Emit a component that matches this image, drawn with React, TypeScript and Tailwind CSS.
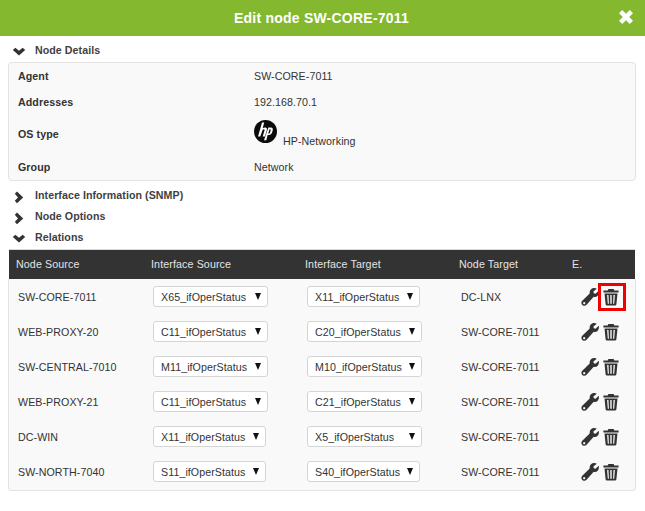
import React from 'react';

type Relation = {
  source: string;
  ifSource: string;
  ifSourceWidth: string;
  ifTarget: string;
  ifTargetWidth: string;
  target: string;
  highlight?: boolean;
};

const relations: Relation[] = [
  { source: 'SW-CORE-7011', ifSource: 'X65_ifOperStatus', ifSourceWidth: 'w-[115px]', ifTarget: 'X11_ifOperStatus', ifTargetWidth: 'w-[113px]', target: 'DC-LNX', highlight: true },
  { source: 'WEB-PROXY-20', ifSource: 'C11_ifOperStatus', ifSourceWidth: 'w-[115px]', ifTarget: 'C20_ifOperStatus', ifTargetWidth: 'w-[115px]', target: 'SW-CORE-7011' },
  { source: 'SW-CENTRAL-7010', ifSource: 'M11_ifOperStatus', ifSourceWidth: 'w-[115px]', ifTarget: 'M10_ifOperStatus', ifTargetWidth: 'w-[115px]', target: 'SW-CORE-7011' },
  { source: 'WEB-PROXY-21', ifSource: 'C11_ifOperStatus', ifSourceWidth: 'w-[115px]', ifTarget: 'C21_ifOperStatus', ifTargetWidth: 'w-[115px]', target: 'SW-CORE-7011' },
  { source: 'DC-WIN', ifSource: 'X11_ifOperStatus', ifSourceWidth: 'w-[113px]', ifTarget: 'X5_ifOperStatus', ifTargetWidth: 'w-[115px]', target: 'SW-CORE-7011' },
  { source: 'SW-NORTH-7040', ifSource: 'S11_ifOperStatus', ifSourceWidth: 'w-[113px]', ifTarget: 'S40_ifOperStatus', ifTargetWidth: 'w-[113px]', target: 'SW-CORE-7011' },
];

const details = [
  { label: 'Agent', value: 'SW-CORE-7011', height: 'h-[26px]' },
  { label: 'Addresses', value: '192.168.70.1', height: 'h-[26px]' },
];

const Chevron = ({ open }: { open: boolean }) => (
  <svg width="14" height="14" viewBox="0 0 14 14" className="shrink-0 translate-y-[2px]" aria-hidden="true">
    {open ? (
      <path d="M0.8 5 L3.4 2.8 L7 5.8 L10.6 2.8 L13.2 5 L7 10.6 Z" fill="#333" />
    ) : (
      <path d="M5 1.4 L11.2 7.4 L5 13.2 L2.8 10.8 L6 7.4 L2.8 3.8 Z" fill="#333" />
    )}
  </svg>
);

const SectionTitle = ({ title, open = false, className = '' }: { title: string; open?: boolean; className?: string }) => (
  <div className={`flex items-center pl-[4px] gap-[9px] h-[21px] text-[10.67px] tracking-[0.05px] font-bold text-[#3f3f3f] ${className}`}>
    <Chevron open={open} />
    <span>{title}</span>
  </div>
);

const Select = ({ value, width }: { value: string; width: string }) => (
  <div className={`flex items-center justify-between h-[21px] pl-[7px] pr-[6px] bg-white border border-[#d5d5d5] rounded-[3px] text-[10.67px] tracking-[0.07px] text-[#333] ${width}`}>
    <span>{value}</span>
    <svg width="6" height="7" viewBox="0 0 6 7" aria-hidden="true">
      <path d="M0 0 H6 L3 7 Z" fill="#111" />
    </svg>
  </div>
);

const WrenchIcon = () => (
  <svg width="18" height="18" viewBox="0 0 18 18" aria-hidden="true">
    <path
      fillRule="evenodd"
      d="M12.2 0.1 Q14.2 -0.2 15.8 0.7 L12.4 3.4 L12.8 5.2 L14.6 5.8 L17.7 2.8 Q18.4 5.5 16.9 7.4 Q15 9.5 12.7 8.8 L5.6 16.8 Q3.7 18.5 1.6 17.2 Q-0.5 15.5 1 13 L8.7 5.5 Q8.2 1.7 12.2 0.1 Z M3.2 14 A1.1 1.1 0 1 0 3.21 14 Z"
      fill="#333"
    />
  </svg>
);

const TrashIcon = () => (
  <svg width="16" height="18" viewBox="0 0 16 18" aria-hidden="true">
    <path d="M5.4 1 L10.6 1 L11.3 2.6 L15.6 2.6 L15.6 4.6 L0.4 4.6 L0.4 2.6 L4.7 2.6 Z" fill="#333" />
    <path
      fillRule="evenodd"
      d="M1.5 5.4 H14.5 L13.4 16.3 Q13.3 17.6 12 17.6 H4 Q2.7 17.6 2.6 16.3 Z M4.1 7 L4.8 15.8 H5.9 L5.5 7 Z M7.3 7 V15.8 H8.7 V7 Z M10.5 7 L10.1 15.8 H11.2 L11.9 7 Z"
      fill="#333"
    />
  </svg>
);

const App = () => {
  return (
    <div className="w-[645px] h-[511px] bg-white font-['Liberation_Sans',Arial,sans-serif] overflow-hidden">
      <header className="relative h-[36px] bg-[#84b82e] flex items-center justify-center">
        <h1 className="text-[14px] font-bold text-white tracking-[0.23px] -translate-x-[1px]">Edit node SW-CORE-7011</h1>
        <svg width="16" height="16" viewBox="0 0 16 16" className="absolute right-[11px] top-[9px]" aria-hidden="true">
          <path d="M4.2 1 L8 4.8 L11.8 1 L15 4.2 L11.2 8 L15 11.8 L11.8 15 L8 11.2 L4.2 15 L1 11.8 L4.8 8 L1 4.2 Z" fill="#fff" />
        </svg>
      </header>

      <div className="px-[8px]">
        <SectionTitle title="Node Details" open className="mt-[3px]" />
        <section className="mt-[2px] w-[628px] h-[119px] bg-[#f9f9f9] border border-[#e2e2e2] rounded-[4px] text-[10.67px] tracking-[0.07px] text-[#333] pl-[9px]">
          {details.map((row) => (
            <div key={row.label} className={`flex items-center ${row.height}`}>
              <span className="w-[236px] font-bold">{row.label}</span>
              <span>{row.value}</span>
            </div>
          ))}
          <div className="flex items-center h-[38px]">
            <span className="w-[236px] font-bold">OS type</span>
            <div className="flex items-end">
              <svg width="23" height="23" viewBox="0 0 23 23" className="mb-[5px]" aria-hidden="true">
                <circle cx="11.5" cy="11.5" r="11.5" fill="#0b0b0b" />
                <path
                  d="M8 2.6 H10.2 L8.7 8 Q10.4 7.4 11.6 7.6 Q13.4 8 12.9 10 L10.9 16.4 H8.7 L10.5 10.4 Q10.7 9.3 9.9 9.3 Q8.9 9.3 8.4 10.4 L6.3 16.4 H4 Z M14.4 7.6 H17.2 Q19.3 7.9 18.8 10 L18.1 12.6 Q17.4 15 15.2 15 H13.7 L12.3 20.2 H10 Z M15.6 9.3 L14.2 13.4 H15 Q15.8 13.4 16.1 12.5 L16.6 10.6 Q16.8 9.3 16 9.3 Z"
                  fill="#fff"
                  fillRule="evenodd"
                />
              </svg>
              <span className="ml-[6px] mb-[-1px]">HP-Networking</span>
            </div>
          </div>
          <div className="flex items-center h-[28px]">
            <span className="w-[236px] font-bold">Group</span>
            <span>Network</span>
          </div>
        </section>

        <SectionTitle title="Interface Information (SNMP)" className="mt-[3px]" />
        <SectionTitle title="Node Options" />
        <SectionTitle title="Relations" open />

        <section className="mt-[2px] w-[628px] text-[10.67px] tracking-[0.07px]">
          <div className="ml-[1px] w-[626px] grid grid-cols-[135px_154px_154px_113px_1fr] items-center h-[30px] pl-[7px] pb-[2px] bg-[#333] text-[#e4e4e4] border-t border-[#d9d9d9] tracking-[0.12px]">
            <span>Node Source</span>
            <span>Interface Source</span>
            <span>Interface Target</span>
            <span>Node Target</span>
            <span>E.</span>
          </div>
          <div className="bg-[#f9f9f9] border border-t-0 border-[#e2e2e2] rounded-b-[4px] pl-[9px] pb-[1px]">
            {relations.map((rel) => (
              <div key={rel.source} className="grid grid-cols-[135px_154px_154px_113px_1fr] items-center h-[35px] text-[#333]">
                <span>{rel.source}</span>
                <Select value={rel.ifSource} width={rel.ifSourceWidth} />
                <Select value={rel.ifTarget} width={rel.ifTargetWidth} />
                <span>{rel.target}</span>
                <div className="flex items-center pl-[7px]">
                  <WrenchIcon />
                  <span
                    className={
                      rel.highlight
                        ? 'ml-[-1px] w-[28px] h-[28px] border-[3px] border-[#f00000] flex items-center justify-center'
                        : 'ml-[-1px] w-[28px] h-[28px] flex items-center justify-center'
                    }
                  >
                    <span className="-translate-x-[1px] flex">
                      <TrashIcon />
                    </span>
                  </span>
                </div>
              </div>
            ))}
          </div>
        </section>
      </div>
    </div>
  );
};

export default App;
